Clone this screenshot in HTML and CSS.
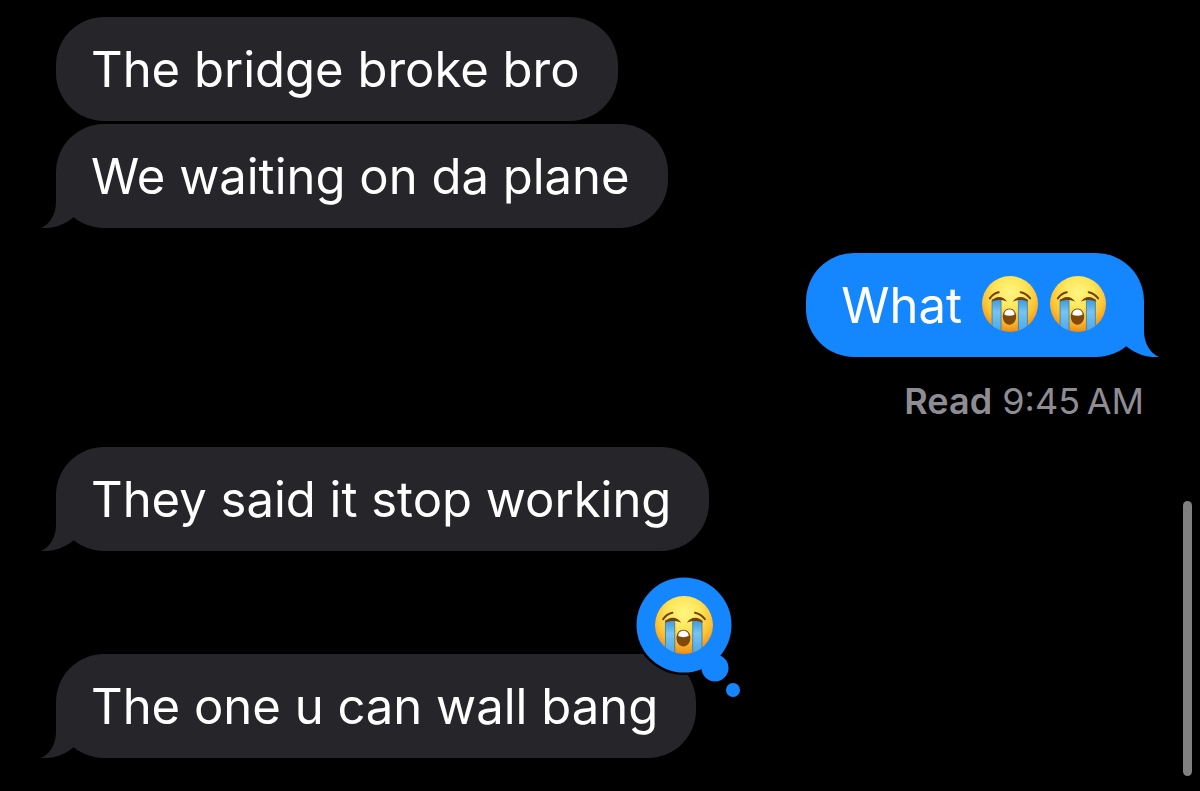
FILE: index.html
```html
<!DOCTYPE html>
<html lang="en">
<head>
<meta charset="utf-8">
<meta name="viewport" content="width=device-width, initial-scale=1">
<title>Messages</title>
<link rel="stylesheet" href="styles.css">
</head>
<body>
<svg class="defs" aria-hidden="true">
  <defs>
    <radialGradient id="face" cx="50%" cy="30%" r="72%">
      <stop offset="0" stop-color="#fff681"/>
      <stop offset="0.4" stop-color="#fee558"/>
      <stop offset="0.7" stop-color="#fcc02f"/>
      <stop offset="1" stop-color="#ee8611"/>
    </radialGradient>
    <linearGradient id="tear" x1="0" y1="0" x2="0" y2="1">
      <stop offset="0" stop-color="#3d98dc"/>
      <stop offset="0.4" stop-color="#76c4f3"/>
      <stop offset="1" stop-color="#4ba9ea"/>
    </linearGradient>
    <clipPath id="round"><circle cx="50" cy="50" r="50"/></clipPath>
    <symbol id="sob" viewBox="0 0 100 100">
      <circle cx="50" cy="50" r="50" fill="url(#face)"/>
      <g clip-path="url(#round)" fill="url(#tear)" stroke="#3f7fa5" stroke-width="1.5">
        <path d="M18 42h16v56q-9-1-16-9z"/>
        <path d="M65 42h16v47q-7 8-16 9z"/>
      </g>
      <g fill="#744008">
        <path d="M17 46C22 35 38 34 45 46C38 42 26 42 17 46Z"/>
        <path d="M55 46C62 34 78 35 83 46C74 42 62 42 55 46Z"/>
      </g>
      <g fill="none" stroke="#744008" stroke-width="3.5" stroke-linecap="round">
        <path d="M14 40Q20 31 30 29"/>
        <path d="M69 29Q79 31 86 40"/>
      </g>
      <path d="M49 58C56 58 61 64 61 72C61 81 56 87 49 87C42 87 37 81 37 72C37 64 42 58 49 58Z" fill="#81490c"/>
      <path d="M49 60C55 60 58 64 58 69Q49 73 40 69C40 64 43 60 49 60Z" fill="#fff"/>
    </symbol>
    <symbol id="tail" viewBox="0 0 40 50">
      <path d="M15 0V24C15 36 9 46 0 50C13 51 25 46 33 39L40 30V0Z" fill="currentColor"/>
    </symbol>
  </defs>
</svg>
<main class="thread">
  <section class="group">
    <p class="bubble">The bridge broke bro</p>
    <p class="bubble">We waiting on da plane<svg class="tail" aria-hidden="true"><use href="#tail"/></svg></p>
  </section>
  <section class="group sent">
    <p class="bubble"><span class="words">What</span> <svg class="emoji" role="img" aria-label="Loudly crying face"><use href="#sob"/></svg><svg class="emoji" role="img" aria-label="Loudly crying face"><use href="#sob"/></svg><svg class="tail" aria-hidden="true"><use href="#tail"/></svg></p>
    <p class="receipt"><strong>Read</strong> 9:45&#8201;AM</p>
  </section>
  <section class="group">
    <p class="bubble">They said it stop working<svg class="tail" aria-hidden="true"><use href="#tail"/></svg></p>
  </section>
  <section class="group reacted">
    <p class="bubble">The one u can wall bang<svg class="tail" aria-hidden="true"><use href="#tail"/></svg>
      <svg class="reaction" viewBox="0 0 108 126" role="img" aria-label="Reaction: loudly crying face">
        <circle cx="50" cy="50" r="50" fill="#000"/>
        <g fill="#1487ff">
          <circle cx="50" cy="50" r="47.5"/>
          <circle cx="81" cy="93" r="13.5"/>
          <circle cx="99" cy="115" r="7"/>
        </g>
        <use href="#sob" x="21" y="21" width="58" height="58"/>
      </svg>
    </p>
  </section>
</main>
<div class="scrollbar"></div>
</body>
</html>
```
FILE: styles.css
```css
* {
  box-sizing: border-box;
}

body {
  margin: 0;
  min-height: 100vh;
  background: #000;
  color: #fff;
  font-family: Inter, "Liberation Sans", sans-serif;
}

p {
  margin: 0;
}

.defs {
  position: absolute;
  width: 0;
  height: 0;
}

.thread {
  display: flex;
  flex-direction: column;
  padding: 17px 56px 32px;
}

.group {
  display: flex;
  flex-direction: column;
  align-items: flex-start;
  gap: 3px;
  margin-bottom: 25px;
}

.bubble {
  position: relative;
  padding: 21px 38px 19px 35px;
  border-radius: 48px;
  background: #26252a;
  color: #fff;
  font-size: 49px;
  line-height: 64px;
}

.tail {
  position: absolute;
  left: -15px;
  bottom: 0;
  width: 40px;
  height: 50px;
  color: #26252a;
}

.sent {
  align-items: flex-end;
  gap: 23px;
}

.sent .bubble {
  display: flex;
  align-items: center;
  gap: 12px;
  background: #1487ff;
}

.sent .tail {
  left: auto;
  right: -15px;
  color: #1487ff;
  transform: scaleX(-1);
}

.words {
  margin-right: 8px;
}

.emoji {
  width: 56px;
  height: 56px;
  margin-bottom: 4px;
}

.receipt {
  color: #8e8d94;
  font-size: 36px;
  line-height: 42px;
}

.receipt strong {
  font-weight: 600;
}

.reacted {
  margin-top: 78px;
  margin-bottom: 0;
}

.reaction {
  position: absolute;
  top: -79px;
  right: -46px;
  width: 108px;
  height: 126px;
}

.scrollbar {
  position: fixed;
  right: 8px;
  bottom: 15px;
  width: 9px;
  height: 275px;
  border-radius: 5px;
  background: #808080;
}
```
